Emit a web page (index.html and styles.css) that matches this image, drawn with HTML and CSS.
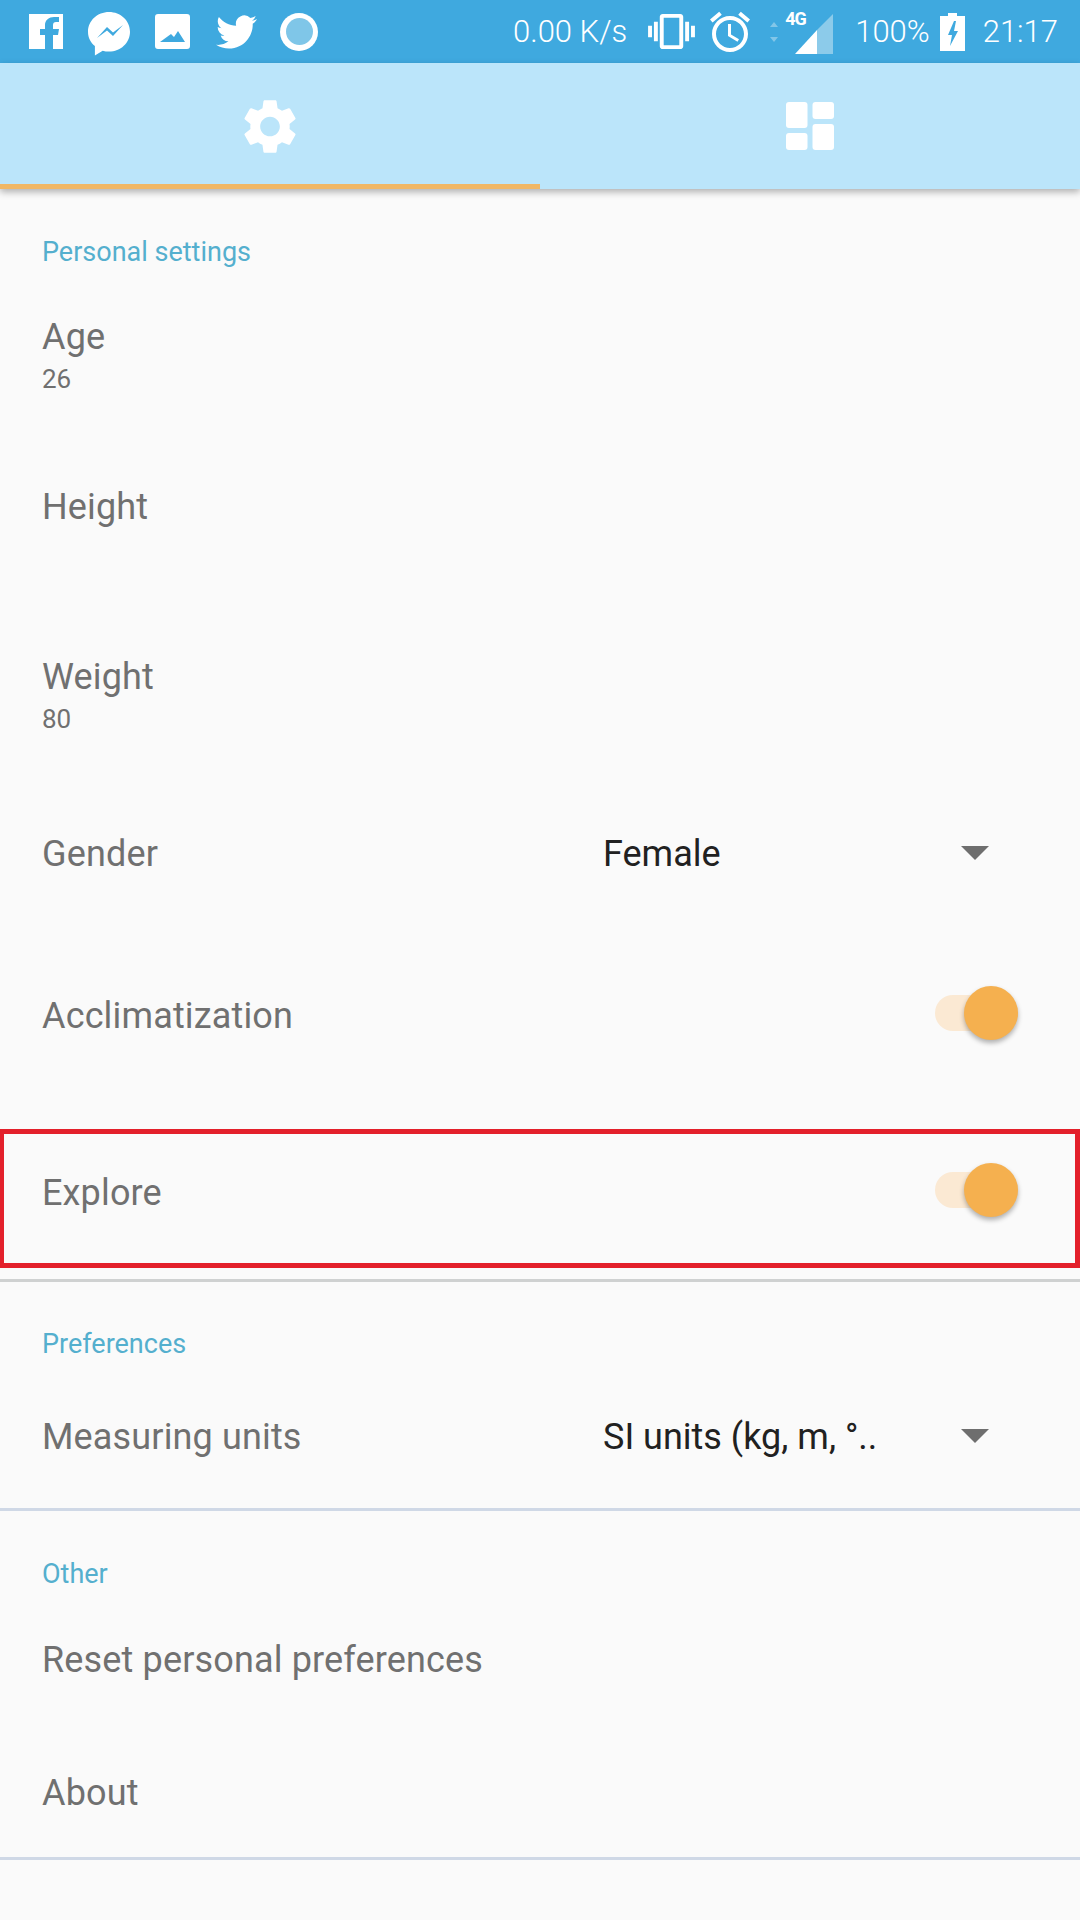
FILE: index.html
```html
<!DOCTYPE html>
<html>
<head>
  <title>Settings</title>
  <link rel="stylesheet" href="styles.css">
</head>
<body>
  <div class="status-bar">
    <div class="status-left">
      <svg class="ic-fb" viewBox="0 0 34 35"><path fill="#fff" fill-rule="evenodd" d="M0 0h34v35H0zM24 35V21h5l1-6h-6v-4c0-2 1-3 3-3h3V3h-5c-5 0-9 3-9 8v4h-5v6h5v14z"/></svg>
      <svg class="ic-msg" viewBox="0 0 42 44"><path fill="#fff" d="M21 0C9.400 0 0 8.700 0 19.700c0 5.800 2.600 10.800 6.900 14.300v9.500l7.800-4.700c2 .6 4.100.8 6.300.8 11.600 0 21-8.800 21-19.900S32.600 0 21 0z"/><path fill="#3fa9df" d="M9 26l10-11 6 5.500L35 13l-10 11-6-5.500z"/></svg>
      <svg class="ic-img" viewBox="0 0 35 35"><path fill="#fff" fill-rule="evenodd" d="M3 0h29a3 3 0 0 1 3 3v29a3 3 0 0 1-3 3H3a3 3 0 0 1-3-3V3a3 3 0 0 1 3-3zM5 28h25l-7-11-4 6-3-3z"/></svg>
      <svg class="ic-tw" viewBox="0 2 24 20"><path fill="#fff" d="M23.953 4.570a10 10 0 0 1-2.825.775 4.958 4.958 0 0 0 2.163-2.723c-.951.555-2.005.959-3.127 1.184a4.920 4.920 0 0 0-8.384 4.482C7.690 8.095 4.067 6.130 1.640 3.162a4.822 4.822 0 0 0-.666 2.475c0 1.710.870 3.213 2.188 4.096a4.904 4.904 0 0 1-2.228-.616v.060a4.923 4.923 0 0 0 3.946 4.827 4.996 4.996 0 0 1-2.212.085 4.936 4.936 0 0 0 4.604 3.417 9.867 9.867 0 0 1-6.102 2.105c-.390 0-.779-.023-1.170-.067a13.995 13.995 0 0 0 7.557 2.209c9.053 0 13.998-7.496 13.998-13.985 0-.210 0-.420-.015-.630A9.935 9.935 0 0 0 24 4.590z"/></svg>
      <div class="ic-dot"><div class="ic-dot-inner"></div></div>
    </div>
    <div class="status-right">
      <span class="speed">0.00 K/s</span>
      <svg class="ic-vib" viewBox="0 1.500 24 21"><path fill="#fff" d="M0 15h2V9H0v6zm3 2h2V7H3v10zm19-8v6h2V9h-2zm-3 8h2V7h-2v10zM16.500 3h-9C6.670 3 6 3.670 6 4.500v15c0 .830.670 1.500 1.500 1.500h9c.830 0 1.500-.670 1.500-1.500v-15c0-.830-.670-1.500-1.500-1.500zM16 19H8V5h8v14z"/></svg>
      <svg class="ic-alarm" viewBox="2 1.500 20 21"><path fill="#fff" d="M22 5.720l-4.600-3.860-1.290 1.530 4.600 3.860L22 5.720zM7.880 3.390L6.600 1.860 2 5.710l1.290 1.530 4.590-3.850zM12.500 8H11v6l4.750 2.850.750-1.230-4-2.370V8zM12 4c-4.970 0-9 4.030-9 9s4.020 9 9 9c4.970 0 9-4.030 9-9s-4.030-9-9-9zm0 16c-3.870 0-7-3.130-7-7s3.130-7 7-7 7 3.130 7 7-3.130 7-7 7z"/></svg>
      <svg class="ic-arrows" viewBox="0 0 8 22"><path fill="#82c6e8" d="M4 1l4 5H0zM0 16h8l-4 5z"/></svg>
      <div class="signal">
        <span class="signal-label">4G</span>
        <svg class="ic-signal" viewBox="0 0 38 40"><path fill="#8ccbea" d="M38 0v40H22V16z"/><path fill="#fff" d="M22 16v24H0z"/></svg>
      </div>
      <span class="battery-text">100%</span>
      <svg class="ic-batt" viewBox="0 0 25 38"><path fill="#fff" fill-rule="evenodd" d="M8 0h9v3h8v35H0V3h8zM14 8L8 22h4l-2 11 8-15h-4l2-10z"/></svg>
      <span class="clock">21:17</span>
    </div>
  </div>

  <div class="tabs">
    <div class="tab tab-active">
      <svg class="tab-gear" viewBox="2.500 2 19 20"><path fill="#fff" d="M19.140 12.940c.040-.300.060-.610.060-.940 0-.320-.020-.640-.070-.940l2.030-1.580c.180-.140.230-.410.120-.610l-1.920-3.320c-.120-.220-.370-.290-.590-.220l-2.390.960c-.500-.380-1.030-.700-1.620-.940l-.360-2.540c-.040-.240-.240-.410-.480-.410h-3.840c-.240 0-.430.170-.470.410l-.360 2.540c-.590.240-1.130.570-1.620.940l-2.390-.960c-.220-.080-.470 0-.590.220L2.740 8.870c-.120.210-.080.470.120.610l2.030 1.580c-.050.300-.090.630-.090.940s.020.640.070.940l-2.030 1.580c-.180.140-.230.410-.120.610l1.920 3.320c.120.220.370.290.590.220l2.390-.960c.500.380 1.030.700 1.620.940l.360 2.540c.050.240.240.410.480.410h3.840c.240 0 .440-.170.470-.410l.360-2.540c.590-.240 1.130-.560 1.620-.940l2.390.960c.220.080.470 0 .590-.220l1.920-3.320c.120-.220.070-.470-.120-.610l-2.010-1.580zM12 15.600c-1.980 0-3.600-1.620-3.600-3.600s1.620-3.600 3.600-3.600 3.600 1.620 3.600 3.600-1.620 3.600-3.600 3.600z"/></svg>
    </div>
    <div class="tab">
      <svg class="tab-dash" viewBox="0 0 48 48"><g fill="#fff"><rect x="0" y="0" width="21.500" height="26" rx="3"/><rect x="0" y="31" width="21.500" height="17" rx="3"/><rect x="26.500" y="0" width="21.500" height="17" rx="3"/><rect x="26.500" y="22" width="21.500" height="26" rx="3"/></g></svg>
    </div>
  </div>

  <div class="section-title first">Personal settings</div>
  <div class="pref">
    <div class="pref-name">Age</div>
    <div class="pref-value">26</div>
  </div>
  <div class="pref">
    <div class="pref-name">Height</div>
  </div>
  <div class="pref pref-last">
    <div class="pref-name">Weight</div>
    <div class="pref-value">80</div>
  </div>

  <div class="line-row">
    <div class="pref-name">Gender</div>
    <div class="select-text">Female</div>
    <div class="select-arrow"></div>
  </div>
  <div class="line-row toggle-row accl">
    <div class="pref-name">Acclimatization</div>
    <div class="toggle"><div class="toggle-thumb"></div></div>
  </div>
  <div class="line-row toggle-row explore">
    <div class="pref-name">Explore</div>
    <div class="toggle"><div class="toggle-thumb"></div></div>
  </div>
  <div class="divider divider-grey"></div>

  <div class="section-title">Preferences</div>
  <div class="line-row units">
    <div class="pref-name">Measuring units</div>
    <div class="select-text">SI units (kg, m, °..</div>
    <div class="select-arrow"></div>
  </div>
  <div class="divider"></div>

  <div class="section-title other">Other</div>
  <div class="line-row link-row">
    <div class="pref-name">Reset personal preferences</div>
  </div>
  <div class="line-row link-row about">
    <div class="pref-name">About</div>
  </div>
  <div class="divider"></div>
</body>
</html>
```

FILE: styles.css
```css
body {
  margin: 0;
  background-color: #fafafa;
  font-family: Roboto, "Liberation Sans", sans-serif;
  height: 1920px;
  overflow: hidden;
}

.status-bar {
  height: 63px;
  background-color: #3fa9df;
  display: flex;
  justify-content: space-between;
  align-items: center;
  color: #fff;
  font-size: 31px;
  font-weight: 300;
}

.status-left {
  display: flex;
  align-items: center;
  padding-left: 29px;
}

.status-right {
  display: flex;
  align-items: center;
  padding-right: 22px;
}

.ic-fb { width: 34px; height: 35px; }
.ic-msg { width: 42px; height: 44px; margin-left: 25px; margin-top: 4px; }
.ic-img { width: 35px; height: 35px; margin-left: 25px; }
.ic-tw { width: 41px; height: 34px; margin-left: 26px; }
.ic-dot {
  width: 38px;
  height: 38px;
  margin-left: 23px;
  border-radius: 50%;
  background-color: #fff;
  display: flex;
  align-items: center;
  justify-content: center;
}
.ic-dot-inner {
  width: 27px;
  height: 27px;
  border-radius: 50%;
  background-color: #7fc6e8;
}

.ic-vib { width: 47px; height: 41px; margin-left: 21px; }
.ic-alarm { width: 40px; height: 42px; margin-left: 15px; }
.ic-arrows { width: 8px; height: 22px; margin-left: 20px; }
.signal { width: 50px; height: 44px; margin-left: 5px; position: relative; }
.signal-label {
  position: absolute;
  left: 2px;
  top: -1px;
  font-size: 18px;
  font-weight: 700;
  line-height: 20px;
  letter-spacing: -1px;
}
.ic-signal { position: absolute; right: 0; bottom: 0; width: 38px; height: 40px; }
.battery-text { margin-left: 22px; }
.ic-batt { width: 25px; height: 38px; margin-left: 10px; }
.clock { margin-left: 18px; }

.tabs {
  height: 126px;
  background-color: #bbe5fa;
  display: flex;
  box-shadow: 0 3px 7px rgba(0, 0, 0, 0.3);
  position: relative;
}

.tab {
  width: 50%;
  display: flex;
  align-items: center;
  justify-content: center;
  box-sizing: border-box;
  padding-top: 0;
}

.tab-active {
  border-bottom: 5px solid #f0b765;
  padding-top: 5px;
}

.tab-gear { width: 52px; height: 55px; }
.tab-dash { width: 48px; height: 48px; }

.section-title {
  height: 58px;
  line-height: 60px;
  margin-top: 32px;
  padding-left: 42px;
  font-size: 27px;
  color: #54afce;
}

.section-title.first {
  margin-top: 33px;
  margin-bottom: 1px;
}

.section-title.other {
  margin-top: 33px;
}

.pref {
  height: 170px;
  padding-left: 42px;
  padding-top: 36px;
  box-sizing: border-box;
}

.pref-last {
  height: 167px;
}

.pref-name {
  font-size: 36px;
  line-height: 40px;
  letter-spacing: 0.15px;
  color: #707070;
}

.pref-value {
  font-size: 26px;
  line-height: 28px;
  margin-top: 8px;
  color: #707070;
}

.line-row {
  height: 130px;
  display: flex;
  align-items: center;
  padding-left: 42px;
  padding-right: 91px;
  box-sizing: border-box;
}

.line-row .pref-name {
  width: 561px;
  flex-shrink: 0;
  padding-top: 2px;
}

.select-text {
  flex: 1;
  padding-top: 2px;
  font-size: 36px;
  line-height: 40px;
  color: #212121;
}

.select-arrow {
  width: 0;
  height: 0;
  border-left: 14px solid transparent;
  border-right: 14px solid transparent;
  border-top: 14px solid #6e6e6e;
}

.toggle-row {
  justify-content: space-between;
  padding-right: 62px;
}

.accl {
  margin-top: 32px;
}

.explore {
  height: 139px;
  margin-top: 49px;
  padding-left: 38px;
  padding-bottom: 13px;
  padding-right: 57px;
  border: 5px solid #e3202b;
  border-left-width: 4px;
  border-right-width: 5px;
}

.toggle {
  width: 83px;
  height: 36px;
  margin-bottom: 4px;
  border-radius: 18px;
  background-color: #fbe9d3;
  position: relative;
}

.toggle-thumb {
  position: absolute;
  right: 0;
  top: -9px;
  width: 54px;
  height: 54px;
  border-radius: 50%;
  background-color: #f5b04f;
  box-shadow: 0 3px 5px rgba(0, 0, 0, 0.3);
}

.divider {
  height: 3px;
  background-color: #cfd8e6;
}

.divider-grey {
  margin-top: 11px;
  background-color: #cfd1d1;
}

.units {
  height: 128px;
  margin-bottom: 8px;
}

.link-row {
  height: 114px;
}

.about {
  margin-top: 19px;
  margin-bottom: 8px;
}
```
